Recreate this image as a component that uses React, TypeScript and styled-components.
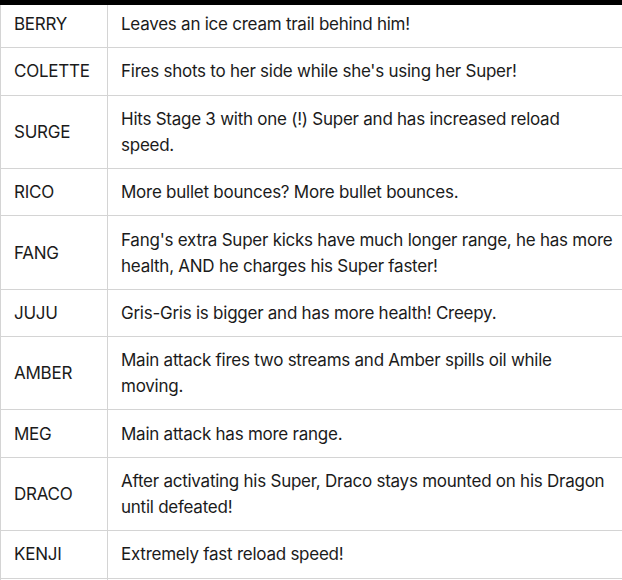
import React from "react";
import styled, { createGlobalStyle } from "styled-components";

interface Row {
  name: string;
  effect: string;
}

const rows: Row[] = [
  { name: "BERRY", effect: "Leaves an ice cream trail behind him!" },
  { name: "COLETTE", effect: "Fires shots to her side while she's using her Super!" },
  { name: "SURGE", effect: "Hits Stage 3 with one (!) Super and has increased reload speed." },
  { name: "RICO", effect: "More bullet bounces? More bullet bounces." },
  {
    name: "FANG",
    effect:
      "Fang's extra Super kicks have much longer range, he has more health, AND he charges his Super faster!",
  },
  { name: "JUJU", effect: "Gris-Gris is bigger and has more health! Creepy." },
  { name: "AMBER", effect: "Main attack fires two streams and Amber spills oil while moving." },
  { name: "MEG", effect: "Main attack has more range." },
  {
    name: "DRACO",
    effect: "After activating his Super, Draco stays mounted on his Dragon until defeated!",
  },
  { name: "KENJI", effect: "Extremely fast reload speed!" },
  // next row only peeks in at the bottom edge
  { name: "", effect: "" },
];

const GlobalStyle = createGlobalStyle`
  html, body {
    margin: 0;
    padding: 0;
    background: #fff;
  }
  body {
    font-family: Inter, "Liberation Sans", sans-serif;
    color: #1b1b1b;
    overflow: hidden;
  }
`;

const Wrap = styled.div`
  width: 622px;
  height: 580px;
  overflow: hidden;
`;

const TopBar = styled.div`
  height: 5px;
  background: #000;
`;

const Table = styled.table`
  width: 632px;
  border-collapse: collapse;
  table-layout: fixed;
  font-size: 17px;
  line-height: 26px;
  letter-spacing: -0.25px;

  tr:first-child td {
    padding-top: 6px;
  }
`;

const Cell = styled.td<{ $first?: boolean }>`
  height: 26px;
  padding: 10.2px ${(p) => (p.$first ? "13px" : "18.5px")} 10.2px 13px;
  border-bottom: 1px solid #d4d4d4;
  border-left: 1px solid #d4d4d4;
  vertical-align: middle;
  width: ${(p) => (p.$first ? "80px" : "auto")};
`;

export default function App() {
  return (
    <>
      <GlobalStyle />
      <Wrap>
        <TopBar />
        <Table>
          <tbody>
            {rows.map((r, i) => (
              <tr key={i}>
                <Cell $first>{r.name}</Cell>
                <Cell>{r.effect}</Cell>
              </tr>
            ))}
          </tbody>
        </Table>
      </Wrap>
    </>
  );
}
